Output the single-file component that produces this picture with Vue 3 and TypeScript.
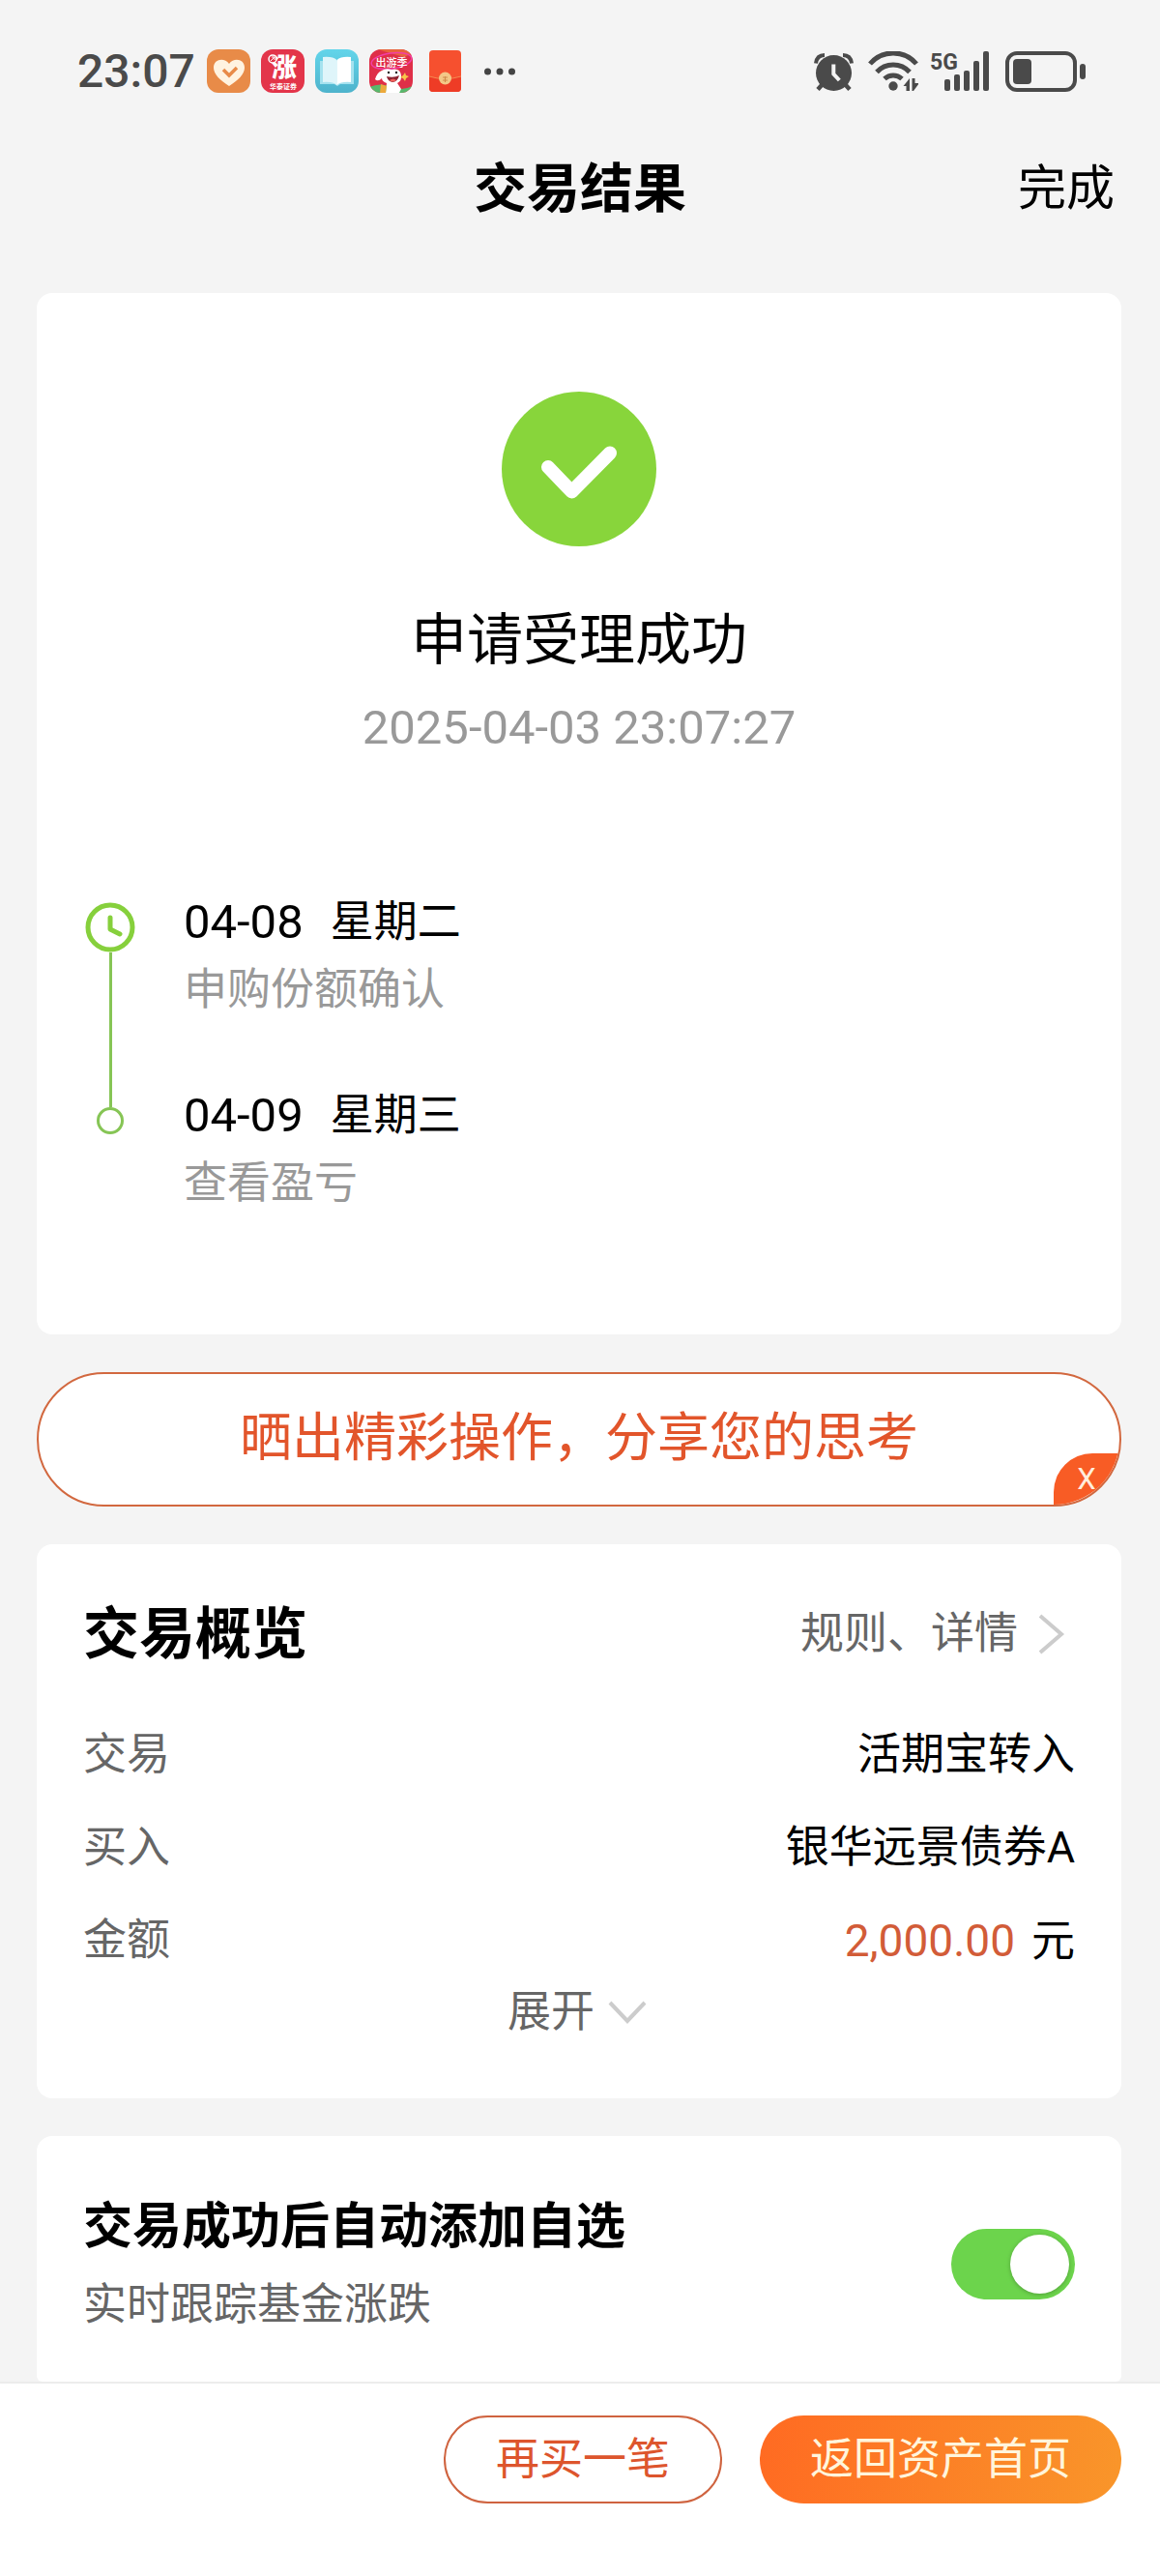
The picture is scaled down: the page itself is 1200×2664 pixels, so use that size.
<script setup lang="ts">
import { ref } from 'vue'

interface Step {
  date: string
  weekday: string
  note: string
}

interface Row {
  label: string
  value: string
  unit?: string
}

const steps: Step[] = [
  { date: '04-08', weekday: '星期二', note: '申购份额确认' },
  { date: '04-09', weekday: '星期三', note: '查看盈亏' },
]

const rows: Row[] = [
  { label: '交易', value: '活期宝转入' },
  { label: '买入', value: '银华远景债券A' },
  { label: '金额', value: '2,000.00', unit: '元' },
]

const autoWatch = ref(true)
const shareVisible = ref(true)
</script>

<template>
  <div class="page">
    <div class="status">
      <span class="time">23:07</span>
      <div class="apps">
        <svg width="45" height="45" viewBox="0 0 45 45" aria-hidden="true">
          <rect width="45" height="45" rx="12" fill="#e88b48" />
          <path d="M23 38C14 32 7 26 7 19c0-9 11-11 16-4 5-7 16-5 16 4 0 7-7 13-16 19z" fill="#fff3e0" />
          <path d="M17 21l6 6 8-8" fill="none" stroke="#e88b48" stroke-width="3.500" />
        </svg>
        <svg width="45" height="45" viewBox="0 0 45 45" aria-hidden="true">
          <rect width="45" height="45" rx="12" fill="#e3354a" />
          <text x="24" y="28" class="glyph" font-size="26" font-weight="900" text-anchor="middle">涨</text>
          <circle cx="12" cy="10" r="4" fill="#e3354a" stroke="#fff" stroke-width="1.500" />
          <path d="M10 12l4-4m-3 0h3v3" fill="none" stroke="#fff" />
          <text x="23" y="41" class="glyph" font-size="7" font-weight="700" text-anchor="middle">华泰证券</text>
        </svg>
        <svg width="45" height="45" viewBox="0 0 45 45" aria-hidden="true">
          <defs>
            <linearGradient id="book" x1="0" y1="0" x2="0" y2="1">
              <stop offset="0" stop-color="#63d5ea" />
              <stop offset="1" stop-color="#4eb3cc" />
            </linearGradient>
          </defs>
          <rect width="45" height="45" rx="12" fill="url(#book)" />
          <path d="M5 12h35v24H26l-3 2-3-2H5z" fill="#a5e2ef" />
          <path d="M8 8q10-1 14.500 3v26Q18 33 8 34z" fill="#dff5fa" />
          <path d="M37 8q-10-1-14.500 3v26Q27 33 37 34z" fill="#fff" />
        </svg>
        <svg width="45" height="45" viewBox="0 0 45 45" aria-hidden="true">
          <defs>
            <clipPath id="tile"><rect width="45" height="45" rx="12" /></clipPath>
          </defs>
          <g clip-path="url(#tile)">
            <rect width="45" height="45" fill="#df2f48" />
            <path d="M8 0l28 8 9-4V0z" fill="#e8643c" />
            <path d="M0 39q12-5 22 0t23-1v7H0z" fill="#58b86c" />
            <ellipse cx="23" cy="12" rx="21" ry="8" fill="none" stroke="#f23fa5" stroke-width="1.500" transform="rotate(-8 23 12)" />
            <path d="M13 22q4-3 10-1 9-2 10 6 1 5-4 8l4 6-2 4H17l1-10q-5-2-5-5-4 4-7 1 2-7 7-9z" fill="#fff" />
            <circle cx="20" cy="24" r="1.200" fill="#222" />
            <circle cx="28" cy="24" r="1.200" fill="#222" />
            <path d="M18 28q7 2 13-1-2 7-7 7-5-1-6-6z" fill="#8d2432" />
            <path d="M21 32q4-3 7 0-4 3-7 0z" fill="#f0605a" />
            <path d="M37 24l1 3 3 1-3 2-1 3-2-3-3-1 3-2z" fill="#f8c64a" />
            <path d="M12 36l6 2-1 7h-6z" fill="#eda93c" />
          </g>
          <text x="23" y="18" class="glyph" font-size="11" font-weight="500" text-anchor="middle">出游季</text>
        </svg>
        <svg width="45" height="45" viewBox="0 0 45 45" aria-hidden="true">
          <rect x="6" y="1" width="33" height="43" rx="4" fill="#f6502f" />
          <path d="M6 28q16 5 33 0v12q0 4-4 4H10q-4 0-4-4z" fill="#ee3c26" />
          <path d="M6 28q16 5 33 0" fill="none" stroke="#f58a52" />
          <circle cx="22.500" cy="30" r="6.500" fill="#f3c787" />
          <path d="M20 29h5m-5 3h5m-2.500-4v6" fill="none" stroke="#cf8a4a" />
        </svg>
      </div>
      <svg class="dots" width="32" height="8" viewBox="0 0 32 8" fill="#444" aria-hidden="true">
        <circle cx="3.500" cy="4" r="3.500" />
        <circle cx="16" cy="4" r="3.500" />
        <circle cx="28.500" cy="4" r="3.500" />
      </svg>
      <div class="signals">
        <svg width="44" height="42" viewBox="0 0 44 42" fill="none" stroke="#4a4a4a" aria-hidden="true">
          <circle cx="20.500" cy="22.500" r="18.500" fill="#4a4a4a" stroke="none" />
          <path d="M2 12.500Q3 4 11 4M39 12.500Q38 4 30 4" stroke-width="4" />
          <path d="M8.500 34.500l-4.500 5M32.500 34.500l4.500 5" stroke-width="4.500" />
          <path d="M20.300 13.500V23.500l6 6.500" stroke="#f4f4f4" stroke-width="4" />
        </svg>
        <svg width="52" height="42" viewBox="0 0 52 42" fill="none" stroke="#4a4a4a" stroke-width="5" aria-hidden="true">
          <path d="M2 13A31.500 31.500 0 0 1 50 13" />
          <path d="M9 21.500A23 23 0 0 1 43 21.500" />
          <path d="M17 28.500A13 13 0 0 1 35 28.500" />
          <circle cx="26" cy="36" r="4.700" fill="#4a4a4a" stroke="none" />
          <path d="M36.500 36L43 28v13h-3.500v-5zM45.500 28H48.500v5H53L47 41h-1.500z" fill="#4a4a4a" stroke="none" />
        </svg>
        <svg width="66" height="50" viewBox="0 -4 66 50" fill="#4a4a4a" aria-hidden="true">
          <text x="0" y="19" class="net" font-size="23" font-weight="700">5G</text>
          <rect x="15" y="29" width="6" height="12" rx="2" />
          <rect x="25" y="24" width="6" height="17" rx="2" />
          <rect x="35" y="20" width="6" height="21" rx="2" />
          <rect x="45" y="10" width="6" height="31" rx="2" />
          <rect x="55" y="0" width="6" height="41" rx="2" />
        </svg>
        <svg width="84" height="42" viewBox="0 0 84 42" fill="#4a4a4a" aria-hidden="true">
          <rect x="2" y="2" width="70" height="38" rx="10" fill="none" stroke="#4a4a4a" stroke-width="4" />
          <rect x="8" y="8" width="19" height="26" rx="4" />
          <rect x="77" y="13" width="6" height="16" rx="3" />
        </svg>
      </div>
    </div>

    <header class="header">
      <h1>交易结果</h1>
      <button type="button" class="done">完成</button>
    </header>

    <main class="main">
      <section class="card result">
        <svg class="tick" width="160" height="160" viewBox="0 0 160 160" aria-hidden="true">
          <circle cx="80" cy="80" r="80" fill="#88d53b" />
          <path d="M48 78L72.500 103.500 112 63.500" fill="none" stroke="#fff" stroke-width="14" stroke-linecap="round" stroke-linejoin="round" />
        </svg>
        <h2>申请受理成功</h2>
        <time class="stamp">2025-04-03 23:07:27</time>
        <ol class="steps">
          <li v-for="(step, i) in steps" :key="step.date" class="step">
            <div class="rail">
              <svg v-if="i === 0" class="clock" width="52" height="52" viewBox="0 0 52 52" fill="none" stroke="#86d03c" stroke-width="5" aria-hidden="true">
                <circle cx="26" cy="26" r="23" />
                <path d="M26 16v12l10 5" stroke-linecap="round" stroke-linejoin="round" />
              </svg>
              <span v-else class="lead" />
              <span v-if="i === 0" class="line" />
              <span v-else class="dot" />
            </div>
            <div class="step-text">
              <p class="when"><span class="num">{{ step.date }}</span><span>{{ step.weekday }}</span></p>
              <p class="note">{{ step.note }}</p>
            </div>
          </li>
        </ol>
      </section>

      <div v-if="shareVisible" class="share">
        <button type="button" class="share-main">晒出精彩操作，分享您的思考</button>
        <button type="button" class="share-close" @click="shareVisible = false">X</button>
      </div>

      <section class="card overview">
        <div class="overview-head">
          <h2>交易概览</h2>
          <a href="#" class="rules">
            规则、详情
            <svg width="28" height="42" viewBox="0 0 28 42" fill="none" stroke="#ccc" stroke-width="4" aria-hidden="true">
              <path d="M2 2l22 19L2 40" />
            </svg>
          </a>
        </div>
        <dl class="rows">
          <div v-for="row in rows" :key="row.label" class="row">
            <dt>{{ row.label }}</dt>
            <dd v-if="row.unit"><span class="amount">{{ row.value }}</span>{{ row.unit }}</dd>
            <dd v-else>{{ row.value }}</dd>
          </div>
        </dl>
        <button type="button" class="expand">
          展开
          <svg width="40" height="26" viewBox="0 0 40 26" fill="none" stroke="#ccc" stroke-width="4" aria-hidden="true">
            <path d="M2 3l18 19L38 3" />
          </svg>
        </button>
      </section>

      <section class="card watch">
        <label for="auto-watch" class="watch-text">
          <strong>交易成功后自动添加自选</strong>
          <span>实时跟踪基金涨跌</span>
        </label>
        <input id="auto-watch" v-model="autoWatch" type="checkbox" class="toggle" />
      </section>
    </main>

    <footer class="footer">
      <button type="button" class="again">再买一笔</button>
      <button type="button" class="home">返回资产首页</button>
    </footer>
  </div>
</template>

<style>
body {
  margin: 0;
  background: #f4f4f4;
}
</style>

<style scoped>
.page {
  display: flex;
  flex-direction: column;
  min-height: 100vh;
  background: #f4f4f4;
  color: #000;
  font-family: Roboto, "Noto Sans CJK SC", sans-serif;
  font-size: 45px;
  line-height: 60px;
}

h1, h2, p, ol, dl, dd {
  margin: 0;
  padding: 0;
}

button {
  margin: 0;
  padding: 0;
  border: 0;
  background: none;
  color: inherit;
  font: inherit;
  cursor: pointer;
}

svg {
  display: block;
  flex: none;
}

.status {
  display: flex;
  align-items: center;
  height: 147px;
  padding: 0 76px 0 80px;
}

.time {
  color: #4a4a4a;
  font-size: 48px;
  font-weight: 500;
}

.apps {
  display: flex;
  gap: 11px;
  margin-left: 12px;
}

.glyph {
  fill: #fff;
  font-family: Roboto, "Noto Sans CJK SC", sans-serif;
}

.net {
  font-family: Roboto, sans-serif;
}

.dots {
  margin-left: 18px;
}

.signals {
  display: flex;
  align-items: center;
  gap: 12px;
  margin-left: auto;
}

.header {
  display: grid;
  grid-template-columns: 1fr auto 1fr;
  align-items: center;
  height: 92px;
  padding: 2px 47px 0;
}

.header h1 {
  grid-column: 2;
  font-size: 55px;
  font-weight: 700;
}

.done {
  justify-self: end;
  font-size: 50px;
}

.main {
  display: flex;
  flex: 1;
  flex-direction: column;
  gap: 39px;
  padding: 62px 40px 0 38px;
}

.card {
  padding: 0 48px;
  border-radius: 16px;
  background: #fff;
}

.result {
  display: flex;
  flex-direction: column;
  align-items: center;
  padding-top: 102px;
  padding-bottom: 128px;
}

.result h2 {
  margin-top: 62px;
  font-size: 58px;
  font-weight: 400;
  line-height: 70px;
}

.stamp {
  margin-top: 26px;
  color: #999;
  font-size: 49px;
}

.steps {
  align-self: stretch;
  margin-top: 141px;
  list-style: none;
}

.step {
  display: flex;
  gap: 48px;
}

.step:not(:last-child) .step-text {
  padding-bottom: 70px;
}

.rail {
  display: flex;
  flex-direction: column;
  align-items: center;
  width: 56px;
}

.clock {
  margin-top: 9px;
}

.line {
  flex: 1;
  width: 3px;
  background: #86c555;
}

.lead {
  width: 3px;
  height: 21px;
  background: #86c555;
}

.dot {
  box-sizing: border-box;
  width: 28px;
  height: 28px;
  border: 3px solid #86c555;
  border-radius: 50%;
}

.when {
  display: flex;
  gap: 28px;
}

.num {
  font-size: 49px;
}

.note {
  margin-top: 10px;
  color: #999;
}

.step:last-child {
  margin-bottom: -2px;
}

.share {
  position: relative;
  box-sizing: border-box;
  overflow: hidden;
  border: 2px solid #d2683f;
  border-radius: 70px;
  background: #fff;
}

.share-main {
  display: block;
  width: 100%;
  padding: 37px 0 38px;
  color: #e2552b;
  font-size: 54px;
}

.share-close {
  position: absolute;
  right: 0;
  bottom: 0;
  width: 68px;
  height: 53px;
  border-top-left-radius: 40px;
  background: #f85c25;
  color: #ffeedd;
  font-size: 31px;
  line-height: 53px;
}

.overview {
  padding-top: 58px;
  padding-bottom: 59px;
}

.overview-head {
  display: flex;
  align-items: center;
  justify-content: space-between;
}

.overview-head h2 {
  font-size: 58px;
  font-weight: 700;
  line-height: 70px;
}

.rules {
  display: flex;
  align-items: center;
  gap: 21px;
  padding-right: 10px;
  color: #666;
  text-decoration: none;
}

.rows {
  display: flex;
  flex-direction: column;
  gap: 36px;
  margin-top: 60px;
}

.row {
  display: flex;
  justify-content: space-between;
}

.row dt {
  color: #666;
}

.amount {
  margin-right: 17px;
  color: #d25c38;
  font-size: 46px;
}

.expand {
  display: flex;
  align-items: center;
  gap: 14px;
  margin: 13px auto 0;
  padding-right: 4px;
  color: #666;
}

.watch {
  display: flex;
  align-items: center;
  justify-content: space-between;
  padding-top: 60px;
  padding-bottom: 49px;
  border-radius: 16px 16px 6px 6px;
}

.watch-text {
  display: flex;
  flex-direction: column;
  gap: 21px;
  padding-top: 4px;
}

.watch-text strong {
  font-size: 51px;
  font-weight: 700;
}

.watch-text span {
  color: #666;
}

.toggle {
  display: flex;
  align-items: center;
  box-sizing: border-box;
  width: 128px;
  height: 73px;
  margin: 0;
  padding: 0 6px;
  border-radius: 37px;
  background: #ccc;
  appearance: none;
  cursor: pointer;
}

.toggle::before {
  width: 61px;
  height: 61px;
  border-radius: 50%;
  background: #fff;
  box-shadow: 0 1px 4px rgba(0, 0, 0, 0.25);
  content: "";
}

.toggle:checked {
  justify-content: flex-end;
  background: #6cd44c;
}

.footer {
  display: flex;
  justify-content: flex-end;
  gap: 39px;
  padding: 33px 40px 76px;
  border-top: 2px solid #ececec;
  background: #fff;
}

.again,
.home {
  box-sizing: border-box;
  height: 91px;
  padding: 0 52px;
  border-radius: 46px;
}

.again {
  border: 2px solid #cf633f;
  color: #dd552d;
}

.home {
  background: linear-gradient(100deg, #ff6a22, #f9962a);
  color: #fff5dc;
}
</style>
